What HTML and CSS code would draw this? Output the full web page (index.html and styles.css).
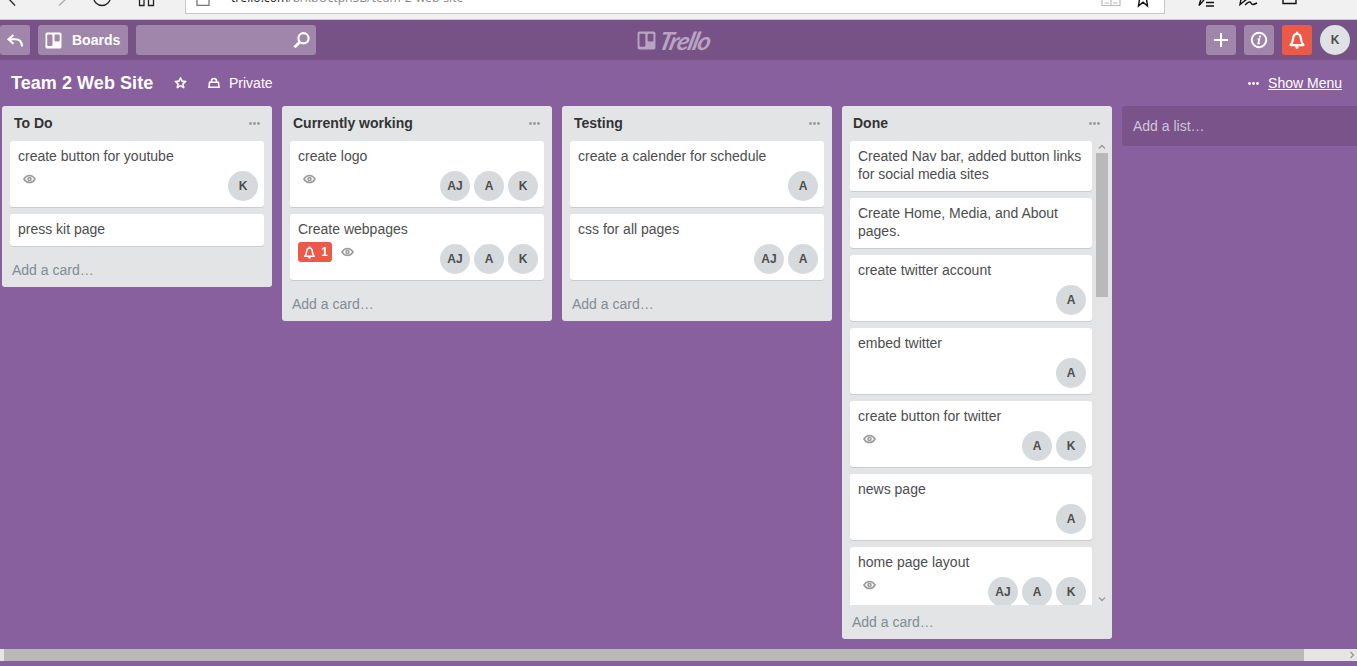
FILE: index.html
```html
<!DOCTYPE html>
<html lang="en">
<head>
<meta charset="utf-8">
<title>Team 2 Web Site | Trello</title>
<link rel="stylesheet" href="styles.css">
</head>
<body>
<svg class="defs" aria-hidden="true">
  <symbol id="eye" viewBox="0 0 14 10"><path d="M1 5C2.6 2.4 4.7 1.2 7 1.2S11.4 2.4 13 5C11.4 7.6 9.3 8.8 7 8.8S2.6 7.6 1 5Z" fill="none" stroke="currentColor" stroke-width="1.6"/><circle cx="7" cy="5" r="1.7" fill="none" stroke="currentColor" stroke-width="1.6"/></symbol>
  <symbol id="bell" viewBox="0 0 16 16"><path d="M2.2 12.5C4 11 4.1 9.5 4.4 7.2C4.7 4.2 5.8 2.5 8 2.5S11.3 4.2 11.6 7.2C11.9 9.5 12 11 13.8 12.5Z" fill="none" stroke="currentColor" stroke-width="1.9" stroke-linejoin="round"/><path d="M7 2V.6h2V2M6.3 13.5h3.4L8.9 15.7H7.1Z" fill="currentColor"/></symbol>
  <symbol id="dots" viewBox="0 0 11 3"><circle cx="1.5" cy="1.5" r="1.4"/><circle cx="5.5" cy="1.5" r="1.4"/><circle cx="9.5" cy="1.5" r="1.4"/></symbol>
  <symbol id="board" viewBox="0 0 17 17"><path fill-rule="evenodd" d="M2 .5H15Q16.5 .5 16.5 2V15Q16.5 16.5 15 16.5H2Q.5 16.5 .5 15V2Q.5 .5 2 .5ZM3.2 2.5Q2.2 2.5 2.2 3.5V13Q2.2 14 3.2 14H6.5Q7.5 14 7.5 13V3.5Q7.5 2.5 6.5 2.5ZM10.5 2.5Q9.5 2.5 9.5 3.5V8.5Q9.5 9.5 10.5 9.5H13.7Q14.7 9.5 14.7 8.5V3.5Q14.7 2.5 13.7 2.5Z"/></symbol>
</svg>
<div class="browser">
  <svg class="nav-icons" width="185" height="19" viewBox="0 0 185 19" fill="none" stroke="#222" stroke-width="1.3"><path d="M8-2L15 5.5"/><path d="M67-2L59 5.5" stroke="#aaa"/><circle cx="102" cy="-3" r="8.5"/><path d="M139.5-2V5.5H144V-2M148.500-2V5.500H153.500V-2"/></svg>
  <div class="address">
    <svg class="page-icon" width="16" height="8" viewBox="0 0 16 8" fill="none" stroke="#777" stroke-width="1.3"><path d="M2-1V5.3H14V-1"/></svg>
    <span class="url">trello.com<span class="path">/b/kbUctphSB/team-2-web-site</span></span>
    <svg class="address-end" width="52" height="10" viewBox="0 0 52 10" fill="none"><path d="M1-1V5.5H19V-1M10-1V5M3.500 3H8M12 3H16.500" stroke="#bbb" stroke-width="1.2"/><path d="M38.500-1L37.500 6L42 2.200L46.500 6L45.500-1" stroke="#111" stroke-width="1.4"/></svg>
  </div>
  <svg class="hub-icons" width="192" height="19" viewBox="0 0 192 19" fill="none" stroke="#111" stroke-width="1.4"><path d="M36-1L34 5.500L39 0M41 2.500H49M41 6H49M76-1L75 4.500L82-1M80 5C83 2 85 1 86 3S88 5 92 3M118-1V3.500H131V-1"/></svg>
</div>
<header class="header">
  <div class="header-left">
    <div class="btn back"><svg width="18" height="16" viewBox="0 0 18 16" fill="none" stroke="#fff" stroke-width="2.100"><path d="M7.500 3L2.500 7.300L7.500 11.800M2.700 7.300H9C13.500 7.300 16 9.500 16 14.500"/></svg></div>
    <div class="btn boards"><svg width="17" height="17" fill="#fff"><use href="#board"/></svg><span>Boards</span></div>
    <div class="btn search"><svg width="17" height="17" viewBox="0 0 17 17" fill="none" stroke="#fff"><circle cx="10.500" cy="6.300" r="5.100" stroke-width="2.200"/><path d="M6.700 10.200L1.500 15.300" stroke-width="3"/></svg></div>
  </div>
  <div class="logo"><svg width="19" height="19" viewBox="0 0 17 17"><use href="#board"/></svg><span class="wordmark">Trello</span></div>
  <div class="header-right">
    <div class="btn square"><svg width="16" height="16" viewBox="0 0 16 16" stroke="#fff" stroke-width="2"><path d="M8 1V15M1 8H15"/></svg></div>
    <div class="btn square"><svg width="18" height="18" viewBox="0 0 18 18" fill="none" stroke="#fff"><circle cx="9" cy="9" r="7.200" stroke-width="2"/><path d="M7.500 8H9.300L8.300 12.300H9.900" stroke-width="1.700"/><path d="M9.100 5.500H10.900" stroke-width="1.800"/></svg></div>
    <div class="btn square alert"><svg width="18" height="18"><use href="#bell"/></svg></div>
    <div class="avatar user">K</div>
  </div>
</header>
<div class="board-header">
  <h1>Team 2 Web Site</h1>
  <svg class="star" width="13" height="14" viewBox="0 0 14 14" fill="none" stroke="#fff" stroke-width="1.700" stroke-linejoin="round"><path d="M7 1.400L8.600 5L12.600 5.400L9.600 8L10.500 12L7 9.900L3.500 12L4.400 8L1.400 5.400L5.400 5Z"/></svg>
  <svg class="lock" width="12" height="12" viewBox="0 0 12 12" fill="none" stroke="#fff" stroke-width="1.600"><path d="M1.600 5.200H10.400L11 10.200H1ZM3.500 5V4Q3.500 1.500 6 1.500T8.500 4V5"/></svg>
  <span class="private">Private</span>
  <svg class="menu-dots" width="11" height="3"><use href="#dots"/></svg>
  <a class="show-menu">Show Menu</a>
</div>
<main class="board">
  <section class="list">
    <h2><span class="t">To Do</span><svg width="11" height="3"><use href="#dots"/></svg></h2>
    <div class="cards">
      <article class="card"><p>create button for youtube</p><div class="meta"><svg class="eye"><use href="#eye"/></svg><div class="members"><span class="avatar">K</span></div></div></article>
      <article class="card"><p>press kit page</p></article>
    </div>
    <div class="add-card">Add a card…</div>
  </section>
  <section class="list">
    <h2><span>Currently working</span><svg width="11" height="3"><use href="#dots"/></svg></h2>
    <div class="cards">
      <article class="card"><p>create logo</p><div class="meta"><svg class="eye"><use href="#eye"/></svg><div class="members"><span class="avatar">AJ</span><span class="avatar">A</span><span class="avatar">K</span></div></div></article>
      <article class="card"><p>Create webpages</p><div class="meta"><span class="badge"><svg width="13" height="13"><use href="#bell"/></svg>1</span><svg class="eye after-badge"><use href="#eye"/></svg><div class="members"><span class="avatar">AJ</span><span class="avatar">A</span><span class="avatar">K</span></div></div></article>
    </div>
    <div class="add-card">Add a card…</div>
  </section>
  <section class="list">
    <h2><span class="t">Testing</span><svg width="11" height="3"><use href="#dots"/></svg></h2>
    <div class="cards">
      <article class="card"><p>create a calender for schedule</p><div class="meta"><div class="members"><span class="avatar">A</span></div></div></article>
      <article class="card"><p>css for all pages</p><div class="meta"><div class="members"><span class="avatar">AJ</span><span class="avatar">A</span></div></div></article>
    </div>
    <div class="add-card">Add a card…</div>
  </section>
  <section class="list">
    <h2><span>Done</span><svg width="11" height="3"><use href="#dots"/></svg></h2>
    <div class="scroll-area">
      <div class="cards clipped">
        <article class="card"><p>Created Nav bar, added button links for social media sites</p></article>
        <article class="card"><p>Create Home, Media, and About pages.</p></article>
        <article class="card"><p>create twitter account</p><div class="meta"><div class="members"><span class="avatar">A</span></div></div></article>
        <article class="card"><p>embed twitter</p><div class="meta"><div class="members"><span class="avatar">A</span></div></div></article>
        <article class="card"><p>create button for twitter</p><div class="meta"><svg class="eye"><use href="#eye"/></svg><div class="members"><span class="avatar">A</span><span class="avatar">K</span></div></div></article>
        <article class="card"><p>news page</p><div class="meta"><div class="members"><span class="avatar">A</span></div></div></article>
        <article class="card"><p>home page layout</p><div class="meta"><svg class="eye"><use href="#eye"/></svg><div class="members"><span class="avatar">AJ</span><span class="avatar">A</span><span class="avatar">K</span></div></div></article>
      </div>
      <div class="vscroll">
        <svg width="12" height="12" viewBox="0 0 12 12"><path d="M3 7.500L6 4.500L9 7.500"/></svg>
        <div class="vthumb"></div>
        <svg class="down" width="12" height="12" viewBox="0 0 12 12"><path d="M3 4.500L6 7.500L9 4.500"/></svg>
      </div>
    </div>
    <div class="add-card tight">Add a card…</div>
  </section>
  <div class="add-list">Add a list…</div>
</main>
<div class="hscroll"><div class="hthumb"></div><svg width="8" height="12" viewBox="0 0 8 12"><path d="M1.500 3L4.500 6L1.500 9"/></svg></div>
</body>
</html>
```

FILE: styles.css
```css
* { box-sizing: border-box; }
body {
  margin: 0;
  width: 1357px;
  height: 666px;
  overflow: hidden;
  display: flex;
  flex-direction: column;
  background: #89609e;
  font: 14px/18px "Liberation Sans", Arial, sans-serif;
  color: #4d4d4d;
}
svg { display: block; flex: none; }
.defs { position: absolute; width: 0; height: 0; }
h1, h2, p { margin: 0; }

.browser {
  flex: none;
  height: 20px;
  display: flex;
  background: #f1f1f1;
  border-bottom: 1px solid #cfc9d2;
}
.address {
  width: 980px;
  height: 14px;
  display: flex;
  background: #fff;
  border: 1px solid #c6c6c6;
  border-top: 0;
  overflow: hidden;
}
.page-icon { margin-left: 9px; }
.url {
  margin: -11px 0 0 20px;
  width: 260px;
  font: 12.2px/18px "Open Sans", "Noto Sans", sans-serif;
  color: #222;
  white-space: nowrap;
}
.path { color: #888; }
.address-end { margin-left: auto; margin-right: 11px; }

.header {
  flex: none;
  height: 40px;
  display: grid;
  grid-template-columns: 1fr auto 1fr;
  align-items: center;
  background: #765286;
}
.header-left { display: flex; gap: 8px; }
.header-right { display: flex; gap: 8px; justify-content: flex-end; padding-right: 7px; }
.btn {
  height: 30px;
  display: flex;
  align-items: center;
  border-radius: 3px;
  background: #9f86aa;
  color: #fff;
}
.back { width: 30px; padding-left: 6px; }
.boards { width: 90px; padding-left: 7px; gap: 10px; font-weight: bold; }
.search { width: 180px; justify-content: flex-end; padding-right: 6px; }
.square { width: 30px; justify-content: center; }
.alert { background: #eb5a46; }
.logo { display: flex; align-items: center; width: 80px; gap: 4px; margin-left: -4px; fill: #b9a3c3; color: #b9a3c3; }
.wordmark {
  font: italic 700 25px/30px Lato, sans-serif;
  letter-spacing: -1.2px;
  transform: skewX(-14deg);
}
.avatar {
  width: 30px;
  height: 30px;
  flex: none;
  border-radius: 50%;
  background: #d6dadc;
  color: #4d4d4d;
  font-size: 12px;
  font-weight: bold;
  line-height: 30px;
  text-align: center;
}
.user { background: #dfe1e4; }

.board-header {
  flex: none;
  height: 46px;
  padding: 0 15px 0 11px;
  display: flex;
  align-items: center;
  color: #fff;
}
h1 { font-size: 18px; line-height: 24px; letter-spacing: .06px; width: 163px; white-space: nowrap; }
.lock { margin-left: 21px; }
.private { margin-left: 9px; }
.menu-dots { margin-left: auto; fill: #fff; }
.show-menu { margin-left: 9px; text-decoration: underline; }

.board {
  flex: 1;
  display: flex;
  align-items: flex-start;
  gap: 10px;
  padding-left: 2px;
}
.list {
  width: 270px;
  flex: none;
  background: #e2e4e6;
  border-radius: 3px;
}
h2 {
  height: 35px;
  display: flex;
  justify-content: space-between;
  align-items: center;
  padding: 0 12px 1px 11px;
  font-size: 14px;
  color: #333;
}
h2 .t { padding-left: 1px; }
h2 svg { fill: #999; }
.cards { display: flex; flex-direction: column; gap: 7px; padding: 0 8px; }
.card {
  flex: none;
  padding: 6px 6px 8px 8px;
  background: #fff;
  border-radius: 3px;
  box-shadow: 0 1px 0 #ccc;
}
.meta { display: flex; height: 36px; margin-bottom: -2px; }
.eye { width: 13px; height: 10px; margin: 9px 0 0 5px; color: #999; }
.after-badge { margin-left: 9px; }
.members { display: flex; gap: 4px; margin: 6px 0 0 auto; }
.badge {
  width: 34px;
  height: 20px;
  margin-top: 4px;
  padding: 0 4px 0 5px;
  display: flex;
  align-items: center;
  justify-content: space-between;
  border-radius: 3px;
  background: #eb5a46;
  color: #fff;
  font-size: 12px;
  font-weight: bold;
}
.add-card { margin-top: 8px; padding: 7px 10px 8px; color: #838c91; }
.scroll-area { display: flex; height: 464px; }
.clipped { width: 250px; padding-right: 0; overflow: hidden; }
.vscroll { width: 12px; margin-left: 4px; background: #e5e5e5; display: flex; flex-direction: column; }
.vscroll svg, .hscroll svg { fill: none; stroke: #999; stroke-width: 1.3; }
.vthumb { height: 144px; background: #b9b9b9; }
.down { margin-top: auto; }
.tight { margin-top: 0; padding: 8px 10px; }
.add-list {
  flex: 1;
  height: 40px;
  padding: 11px;
  border-radius: 3px 0 0 3px;
  background: #795389;
  color: #d3c3da;
}
.hscroll {
  flex: none;
  height: 12px;
  margin-bottom: 5px;
  padding-left: 4px;
  display: flex;
  justify-content: space-between;
  background: #e5e5e5;
}
.hthumb { width: 1300px; background: #b9b9b9; }
```
